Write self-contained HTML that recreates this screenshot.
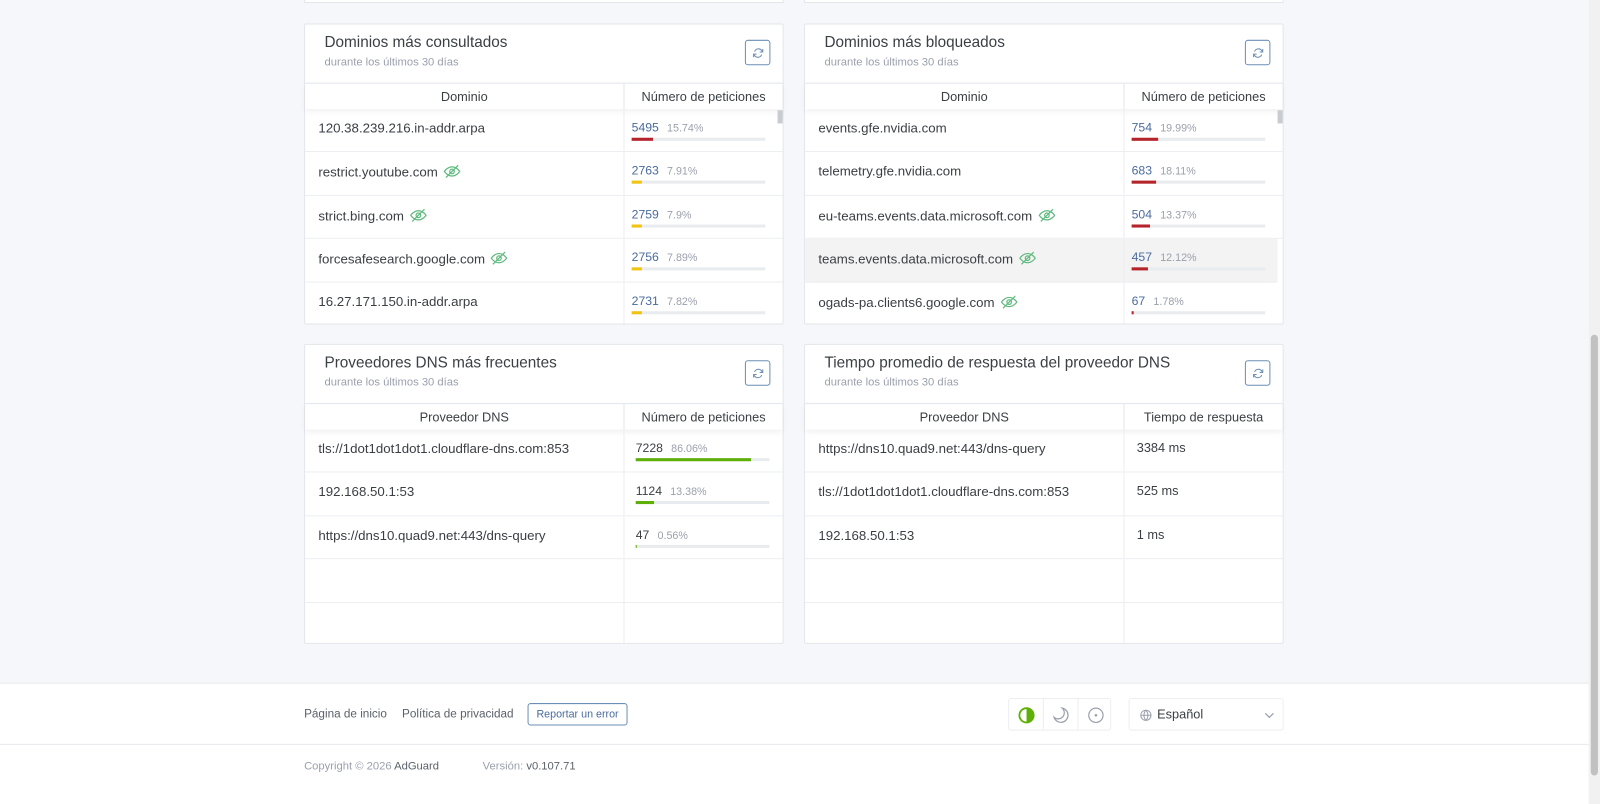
<!DOCTYPE html>
<html><head><meta charset="utf-8"><style>
*{box-sizing:border-box;margin:0;padding:0}
body{width:1600px;height:788px;overflow:hidden;background:#f5f7fb;font-family:"Liberation Sans",sans-serif;color:#495057}
#w{position:absolute;left:0;top:0;width:1568px;height:773px;transform:scale(1.0204);transform-origin:0 0}
.card{position:absolute;width:470px;background:#fff;border:1px solid #e3e6ea;border-radius:2px}
.t{position:absolute;left:19px;top:9px;font-size:15px;color:#3a3f44}
.s{position:absolute;left:19px;top:31px;font-size:11px;color:#9aa0ac}
.rb{position:absolute;left:431px;top:15px;width:25px;height:25px;border:1px solid #6c8fb5;border-radius:3px}
.rb svg{position:absolute;left:6px;top:6px}
.th{position:absolute;left:0;top:57px;width:468px;height:26px;border-top:1px solid #e3e6ea;box-shadow:0 3px 6px rgba(0,0,0,.06);font-size:12.5px;color:#3a3f44}
.th div{position:absolute;top:6px;text-align:center}
.row{position:absolute;left:0;width:468px;border-bottom:1px solid #eceef1;font-size:13px;color:#3a3f44}
.row .d{position:absolute;left:13px;top:11px;white-space:nowrap}
.row .c{position:absolute;left:312px;top:0;bottom:0;border-left:1px solid #eceef1}
.n{position:absolute;left:7px;top:11px;font-size:12px;color:#4a6b9e;white-space:nowrap}
.n i{font-style:normal;color:#9aa0ac;font-size:10.5px;margin-left:8px}
.bar{position:absolute;left:7px;top:28px;width:131px;height:3px;background:#e9ecef}
.bar b{display:block;height:3px}
.eye{display:inline-block;vertical-align:-3px;margin-left:5px}
.ft a{position:absolute;font-size:11.5px;color:#5a6169;text-decoration:none}
</style></head><body><div id="w">
<div style="position:absolute;left:298px;top:-5px;width:470px;height:8px;background:#fff;border:1px solid #e3e6ea"></div>
<div style="position:absolute;left:788px;top:-5px;width:470px;height:8px;background:#fff;border:1px solid #e3e6ea"></div>

<div class="card" style="left:298px;top:23px;height:295px">
<div class="t">Dominios más consultados</div><div class="s">durante los últimos 30 días</div>
<div class="rb"><svg width="12" height="12" viewBox="0 0 24 24" fill="none" stroke="#6c8fb5" stroke-width="2"><path d="M21 4v6h-6M3 20v-6h6M5 9a8 8 0 0 1 14-2l2 3M3 14l2 3a8 8 0 0 0 14-2"/></svg></div>
<div class="th"><div style="left:0;width:312px">Dominio</div><div style="left:312px;width:156px;border-left:1px solid #e3e6ea;top:0;padding-top:6px;height:26px">Número de peticiones</div></div>
<div style="position:absolute;left:463px;top:84px;width:5px;height:13px;background:#c8ccd0"></div>
<div class="row" style="top:83px;height:42px"><div class="d">120.38.239.216.in-addr.arpa</div><div class="c"><div class="n">5495<i>15.74%</i></div><div class="bar"><b style="width:21px;background:#b5242a"></b></div></div></div>
<div class="row" style="top:125px;height:43px"><div class="d">restrict.youtube.com<svg class="eye" width="18" height="16" viewBox="0 0 24 20" fill="none" stroke="#5eba7d" stroke-width="1.6"><path d="M2 10s4-6 10-6 10 6 10 6-4 6-10 6S2 10 2 10z"/><circle cx="12" cy="10" r="3"/><path d="M4 18L20 2"/></svg></div><div class="c"><div class="n">2763<i>7.91%</i></div><div class="bar"><b style="width:10px;background:#f1c40f"></b></div></div></div>
<div class="row" style="top:168px;height:42px"><div class="d">strict.bing.com<svg class="eye" width="18" height="16" viewBox="0 0 24 20" fill="none" stroke="#5eba7d" stroke-width="1.6"><path d="M2 10s4-6 10-6 10 6 10 6-4 6-10 6S2 10 2 10z"/><circle cx="12" cy="10" r="3"/><path d="M4 18L20 2"/></svg></div><div class="c"><div class="n">2759<i>7.9%</i></div><div class="bar"><b style="width:10px;background:#f1c40f"></b></div></div></div>
<div class="row" style="top:210px;height:43px"><div class="d">forcesafesearch.google.com<svg class="eye" width="18" height="16" viewBox="0 0 24 20" fill="none" stroke="#5eba7d" stroke-width="1.6"><path d="M2 10s4-6 10-6 10 6 10 6-4 6-10 6S2 10 2 10z"/><circle cx="12" cy="10" r="3"/><path d="M4 18L20 2"/></svg></div><div class="c"><div class="n">2756<i>7.89%</i></div><div class="bar"><b style="width:10px;background:#f1c40f"></b></div></div></div>
<div class="row" style="top:253px;height:40px;border-bottom:none"><div class="d">16.27.171.150.in-addr.arpa</div><div class="c"><div class="n">2731<i>7.82%</i></div><div class="bar"><b style="width:10px;background:#f1c40f"></b></div></div></div>
</div>

<div class="card" style="left:788px;top:23px;height:295px">
<div class="t">Dominios más bloqueados</div><div class="s">durante los últimos 30 días</div>
<div class="rb"><svg width="12" height="12" viewBox="0 0 24 24" fill="none" stroke="#6c8fb5" stroke-width="2"><path d="M21 4v6h-6M3 20v-6h6M5 9a8 8 0 0 1 14-2l2 3M3 14l2 3a8 8 0 0 0 14-2"/></svg></div>
<div class="th"><div style="left:0;width:312px">Dominio</div><div style="left:312px;width:156px;border-left:1px solid #e3e6ea;top:0;padding-top:6px;height:26px">Número de peticiones</div></div>
<div style="position:absolute;left:463px;top:84px;width:5px;height:13px;background:#c8ccd0"></div>
<div class="row" style="top:83px;height:42px"><div class="d">events.gfe.nvidia.com</div><div class="c"><div class="n">754<i>19.99%</i></div><div class="bar"><b style="width:26px;background:#b5242a"></b></div></div></div>
<div class="row" style="top:125px;height:43px"><div class="d">telemetry.gfe.nvidia.com</div><div class="c"><div class="n">683<i>18.11%</i></div><div class="bar"><b style="width:24px;background:#b5242a"></b></div></div></div>
<div class="row" style="top:168px;height:42px"><div class="d">eu-teams.events.data.microsoft.com<svg class="eye" width="18" height="16" viewBox="0 0 24 20" fill="none" stroke="#5eba7d" stroke-width="1.6"><path d="M2 10s4-6 10-6 10 6 10 6-4 6-10 6S2 10 2 10z"/><circle cx="12" cy="10" r="3"/><path d="M4 18L20 2"/></svg></div><div class="c"><div class="n">504<i>13.37%</i></div><div class="bar"><b style="width:18px;background:#b5242a"></b></div></div></div>
<div class="row" style="top:210px;height:43px;background:#f3f3f3;width:463px"><div class="d">teams.events.data.microsoft.com<svg class="eye" width="18" height="16" viewBox="0 0 24 20" fill="none" stroke="#5eba7d" stroke-width="1.6"><path d="M2 10s4-6 10-6 10 6 10 6-4 6-10 6S2 10 2 10z"/><circle cx="12" cy="10" r="3"/><path d="M4 18L20 2"/></svg></div><div class="c"><div class="n">457<i>12.12%</i></div><div class="bar"><b style="width:16px;background:#b5242a"></b></div></div></div>
<div class="row" style="top:253px;height:40px;border-bottom:none"><div class="d">ogads-pa.clients6.google.com<svg class="eye" width="18" height="16" viewBox="0 0 24 20" fill="none" stroke="#5eba7d" stroke-width="1.6"><path d="M2 10s4-6 10-6 10 6 10 6-4 6-10 6S2 10 2 10z"/><circle cx="12" cy="10" r="3"/><path d="M4 18L20 2"/></svg></div><div class="c"><div class="n">67<i>1.78%</i></div><div class="bar"><b style="width:2px;background:#b5242a"></b></div></div></div>
</div>

<div class="card" style="left:298px;top:337px;height:294px">
<div class="t">Proveedores DNS más frecuentes</div><div class="s">durante los últimos 30 días</div>
<div class="rb"><svg width="12" height="12" viewBox="0 0 24 24" fill="none" stroke="#6c8fb5" stroke-width="2"><path d="M21 4v6h-6M3 20v-6h6M5 9a8 8 0 0 1 14-2l2 3M3 14l2 3a8 8 0 0 0 14-2"/></svg></div>
<div class="th"><div style="left:0;width:312px">Proveedor DNS</div><div style="left:312px;width:156px;border-left:1px solid #e3e6ea;top:0;padding-top:6px;height:26px">Número de peticiones</div></div>
<div class="row" style="top:83px;height:42px"><div class="d">tls://1dot1dot1dot1.cloudflare-dns.com:853</div><div class="c"><div class="n" style="left:11px;color:#3a3f44">7228<i>86.06%</i></div><div class="bar" style="left:11px"><b style="width:113px;background:#5eb006"></b></div></div></div>
<div class="row" style="top:125px;height:43px"><div class="d">192.168.50.1:53</div><div class="c"><div class="n" style="left:11px;color:#3a3f44">1124<i>13.38%</i></div><div class="bar" style="left:11px"><b style="width:18px;background:#5eb006"></b></div></div></div>
<div class="row" style="top:168px;height:42px"><div class="d">https://dns10.quad9.net:443/dns-query</div><div class="c"><div class="n" style="left:11px;color:#3a3f44">47<i>0.56%</i></div><div class="bar" style="left:11px"><b style="width:1px;background:#5eb006"></b></div></div></div>
<div class="row" style="top:210px;height:43px"><div class="c"></div></div>
<div class="row" style="top:253px;height:39px;border-bottom:none"><div class="c"></div></div>
</div>

<div class="card" style="left:788px;top:337px;height:294px">
<div class="t">Tiempo promedio de respuesta del proveedor DNS</div><div class="s">durante los últimos 30 días</div>
<div class="rb"><svg width="12" height="12" viewBox="0 0 24 24" fill="none" stroke="#6c8fb5" stroke-width="2"><path d="M21 4v6h-6M3 20v-6h6M5 9a8 8 0 0 1 14-2l2 3M3 14l2 3a8 8 0 0 0 14-2"/></svg></div>
<div class="th"><div style="left:0;width:312px">Proveedor DNS</div><div style="left:312px;width:156px;border-left:1px solid #e3e6ea;top:0;padding-top:6px;height:26px">Tiempo de respuesta</div></div>
<div class="row" style="top:83px;height:42px"><div class="d">https://dns10.quad9.net:443/dns-query</div><div class="c"><div class="n" style="left:12px;color:#3a3f44;font-size:12.5px">3384 ms</div></div></div>
<div class="row" style="top:125px;height:43px"><div class="d">tls://1dot1dot1dot1.cloudflare-dns.com:853</div><div class="c"><div class="n" style="left:12px;color:#3a3f44;font-size:12.5px">525 ms</div></div></div>
<div class="row" style="top:168px;height:42px"><div class="d">192.168.50.1:53</div><div class="c"><div class="n" style="left:12px;color:#3a3f44;font-size:12.5px">1 ms</div></div></div>
<div class="row" style="top:210px;height:43px"><div class="c"></div></div>
<div class="row" style="top:253px;height:39px;border-bottom:none"><div class="c"></div></div>
</div>

<div class="ft" style="position:absolute;left:0;top:669px;width:1557px;height:119px;background:#fff;border-top:1px solid #e6e8eb">
<a style="left:298px;top:24px">Página de inicio</a>
<a style="left:394px;top:24px">Política de privacidad</a>
<div style="position:absolute;left:517px;top:19px;width:98px;height:22px;border:1px solid #6c8fb5;border-radius:3px;font-size:10.5px;color:#4a6b9e;text-align:center;line-height:20px">Reportar un error</div>
<div style="position:absolute;left:988px;top:14px;width:101px;height:32px;border:1px solid #eceef1;border-radius:3px">
 <div style="position:absolute;left:33px;top:0;bottom:0;border-left:1px solid #eceef1"></div>
 <div style="position:absolute;left:67px;top:0;bottom:0;border-left:1px solid #eceef1"></div>
 <svg style="position:absolute;left:8px;top:7px" width="18" height="18" viewBox="0 0 18 18"><circle cx="9" cy="9" r="7" fill="none" stroke="#5eb006" stroke-width="1.8"/><path d="M9 2a7 7 0 0 1 0 14z" fill="#5eb006"/></svg>
 <svg style="position:absolute;left:42px;top:7px" width="18" height="18" viewBox="0 0 18 18"><path d="M10 2a7 7 0 1 1-8 9 6 6 0 0 0 8-9z" fill="none" stroke="#9aa0ac" stroke-width="1.2"/></svg>
 <svg style="position:absolute;left:76px;top:7px" width="18" height="18" viewBox="0 0 18 18"><circle cx="9" cy="9" r="7" fill="none" stroke="#9aa0ac" stroke-width="1.2"/><circle cx="9" cy="9" r="1.3" fill="#9aa0ac"/></svg>
</div>
<div style="position:absolute;left:1106px;top:14px;width:152px;height:32px;border:1px solid #eceef1;border-radius:3px;font-size:12.5px;color:#3a3f44">
 <svg style="position:absolute;left:10px;top:10px" width="12" height="12" viewBox="0 0 24 24" fill="none" stroke="#9aa0ac" stroke-width="2"><circle cx="12" cy="12" r="10"/><path d="M2 12h20M12 2a15 15 0 0 1 0 20M12 2a15 15 0 0 0 0 20"/></svg>
 <span style="position:absolute;left:27px;top:8px">Español</span>
 <svg style="position:absolute;left:132px;top:12px" width="10" height="8" viewBox="0 0 10 8" fill="none" stroke="#9aa0ac" stroke-width="1.2"><path d="M1 2l4 4 4-4"/></svg>
</div>
<div style="position:absolute;left:0;top:59px;width:1557px;border-top:1px solid #e6e8eb"></div>
<div style="position:absolute;left:298px;top:75px;font-size:11px;color:#9aa0ac">Copyright © 2026 <span style="color:#5a6169">AdGuard</span></div>
<div style="position:absolute;left:473px;top:75px;font-size:11px;color:#9aa0ac">Versión: <span style="color:#5a6169">v0.107.71</span></div>
</div>

<div style="position:absolute;left:1557px;top:0;width:11px;height:788px;background:#f1f1f1"></div>
<div style="position:absolute;left:1559px;top:328px;width:7px;height:432px;background:#c1c1c1;border-radius:4px"></div>
</div></body></html>
